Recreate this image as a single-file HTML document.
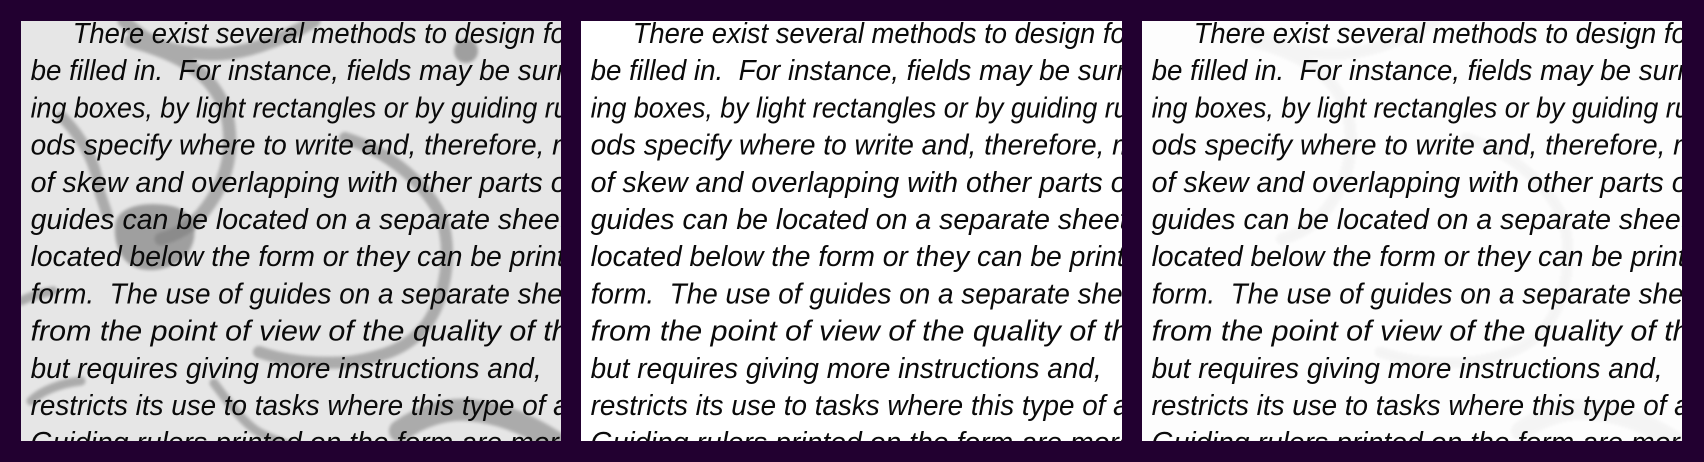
<!DOCTYPE html>
<html><head><meta charset="utf-8"><style>
html,body{margin:0;padding:0;background:#220030;}
svg{display:block}
text{font-family:"Liberation Sans",sans-serif;font-style:italic;font-size:29px;fill:#0a0a0a;white-space:pre}
</style></head><body>
<svg width="1704" height="462" viewBox="0 0 1704 462" xmlns="http://www.w3.org/2000/svg">
<defs>
<clipPath id="c1"><rect x="21" y="21" width="540" height="420"/></clipPath>
<clipPath id="c2"><rect x="581" y="21" width="541" height="420"/></clipPath>
<clipPath id="c3"><rect x="1142" y="21" width="540" height="420"/></clipPath>
<filter id="bl"><feGaussianBlur stdDeviation="1.5"/></filter>
</defs>
<rect width="1704" height="462" fill="#220030"/>

<!-- Panel 1 -->
<g clip-path="url(#c1)">
<rect x="21" y="21" width="540" height="420" fill="#e6e6e6"/>
<g transform="translate(21,21)" fill="none" stroke="#8c8c8c" stroke-linecap="round" opacity="0.65" filter="url(#bl)">
<path d="M103,0 C130,25 150,31 185,33 C220,35 260,20 293,0" stroke-width="13"/>
<path d="M110,20 C160,35 190,50 205,90 C215,130 205,165 179,195 C165,210 150,215 140,218" stroke-width="13"/>
<path d="M41,96 C60,115 75,140 79,172 L86,193" stroke-width="11"/>
<path d="M324,117 C360,128 400,155 420,195 C432,230 425,275 406,303 C390,325 365,336 327,341 C300,343 270,342 238,331" stroke-width="12"/>
<path d="M379,410 C400,395 425,387 448,389 C475,392 500,398 540,425" stroke-width="22"/>
<path d="M193,362 C210,385 225,405 241,413 C265,425 290,432 310,434" stroke-width="9"/>
<path d="M0,280 C10,275 20,272 32,270" stroke-width="9"/>
<path d="M10,380 C20,370 40,362 60,360" stroke-width="9"/>
</g>
<g transform="translate(21,21)" fill="#7a7a7a" opacity="0.65" filter="url(#bl)">
<path d="M95,200 C100,185 125,180 150,185 C175,190 180,215 165,235 C150,250 120,255 105,240 C95,230 92,212 95,200 Z"/>
<ellipse cx="445" cy="30" rx="12" ry="12"/>
</g>
<text x="72.7" y="43" textLength="493" lengthAdjust="spacingAndGlyphs">There exist several methods to design fo</text>
<text x="30.6" y="80.2" textLength="535" lengthAdjust="spacingAndGlyphs">be filled in.  For instance, fields may be surr</text>
<text x="30.6" y="117.4" textLength="538" lengthAdjust="spacingAndGlyphs">ing boxes, by light rectangles or by guiding ru</text>
<text x="30.6" y="154.6" textLength="545" lengthAdjust="spacingAndGlyphs">ods specify where to write and, therefore, m</text>
<text x="30.6" y="191.8" textLength="544" lengthAdjust="spacingAndGlyphs">of skew and overlapping with other parts of</text>
<text x="30.6" y="229" textLength="537" lengthAdjust="spacingAndGlyphs">guides can be located on a separate sheet</text>
<text x="30.6" y="266.2" textLength="534" lengthAdjust="spacingAndGlyphs">located below the form or they can be print</text>
<text x="30.6" y="303.4" textLength="532" lengthAdjust="spacingAndGlyphs">form.  The use of guides on a separate she</text>
<text x="30.6" y="340.6" textLength="538" lengthAdjust="spacingAndGlyphs">from the point of view of the quality of th</text>
<text x="30.6" y="377.8" textLength="511" lengthAdjust="spacingAndGlyphs">but requires giving more instructions and,</text>
<text x="30.6" y="415" textLength="538" lengthAdjust="spacingAndGlyphs">restricts its use to tasks where this type of a</text>
<text x="30.6" y="452.2" textLength="544" lengthAdjust="spacingAndGlyphs">Guiding rulers printed on the form are more</text>
</g>

<!-- Panel 2 -->
<g clip-path="url(#c2)">
<rect x="581" y="21" width="541" height="420" fill="#ffffff"/>
<g transform="translate(560,0)">
<text x="72.7" y="43" textLength="493" lengthAdjust="spacingAndGlyphs">There exist several methods to design fo</text>
<text x="30.6" y="80.2" textLength="535" lengthAdjust="spacingAndGlyphs">be filled in.  For instance, fields may be surr</text>
<text x="30.6" y="117.4" textLength="538" lengthAdjust="spacingAndGlyphs">ing boxes, by light rectangles or by guiding ru</text>
<text x="30.6" y="154.6" textLength="545" lengthAdjust="spacingAndGlyphs">ods specify where to write and, therefore, m</text>
<text x="30.6" y="191.8" textLength="544" lengthAdjust="spacingAndGlyphs">of skew and overlapping with other parts of</text>
<text x="30.6" y="229" textLength="537" lengthAdjust="spacingAndGlyphs">guides can be located on a separate sheet</text>
<text x="30.6" y="266.2" textLength="534" lengthAdjust="spacingAndGlyphs">located below the form or they can be print</text>
<text x="30.6" y="303.4" textLength="532" lengthAdjust="spacingAndGlyphs">form.  The use of guides on a separate she</text>
<text x="30.6" y="340.6" textLength="538" lengthAdjust="spacingAndGlyphs">from the point of view of the quality of th</text>
<text x="30.6" y="377.8" textLength="511" lengthAdjust="spacingAndGlyphs">but requires giving more instructions and,</text>
<text x="30.6" y="415" textLength="538" lengthAdjust="spacingAndGlyphs">restricts its use to tasks where this type of a</text>
<text x="30.6" y="452.2" textLength="544" lengthAdjust="spacingAndGlyphs">Guiding rulers printed on the form are more</text>
</g>
</g>

<!-- Panel 3 -->
<g clip-path="url(#c3)">
<rect x="1142" y="21" width="540" height="420" fill="#fdfdfd"/>
<g transform="translate(1142,21)" fill="none" stroke="#000" stroke-linecap="round" opacity="0.03" filter="url(#bl)">
<path d="M103,0 C130,25 150,31 185,33 C220,35 260,20 293,0" stroke-width="12"/>
<path d="M110,20 C160,35 190,50 205,90 C215,130 205,165 179,195 C165,210 150,215 140,218" stroke-width="12"/>
<path d="M324,117 C360,128 400,155 420,195 C432,230 425,275 406,303 C390,325 365,336 327,341 C300,343 270,342 238,331" stroke-width="11"/>
<path d="M379,410 C400,395 425,387 448,389 C475,392 500,398 540,425" stroke-width="20"/>
</g>
<g transform="translate(1121,0)">
<text x="72.7" y="43" textLength="493" lengthAdjust="spacingAndGlyphs">There exist several methods to design fo</text>
<text x="30.6" y="80.2" textLength="535" lengthAdjust="spacingAndGlyphs">be filled in.  For instance, fields may be surr</text>
<text x="30.6" y="117.4" textLength="538" lengthAdjust="spacingAndGlyphs">ing boxes, by light rectangles or by guiding ru</text>
<text x="30.6" y="154.6" textLength="545" lengthAdjust="spacingAndGlyphs">ods specify where to write and, therefore, m</text>
<text x="30.6" y="191.8" textLength="544" lengthAdjust="spacingAndGlyphs">of skew and overlapping with other parts of</text>
<text x="30.6" y="229" textLength="537" lengthAdjust="spacingAndGlyphs">guides can be located on a separate sheet</text>
<text x="30.6" y="266.2" textLength="534" lengthAdjust="spacingAndGlyphs">located below the form or they can be print</text>
<text x="30.6" y="303.4" textLength="532" lengthAdjust="spacingAndGlyphs">form.  The use of guides on a separate she</text>
<text x="30.6" y="340.6" textLength="538" lengthAdjust="spacingAndGlyphs">from the point of view of the quality of th</text>
<text x="30.6" y="377.8" textLength="511" lengthAdjust="spacingAndGlyphs">but requires giving more instructions and,</text>
<text x="30.6" y="415" textLength="538" lengthAdjust="spacingAndGlyphs">restricts its use to tasks where this type of a</text>
<text x="30.6" y="452.2" textLength="544" lengthAdjust="spacingAndGlyphs">Guiding rulers printed on the form are more</text>
</g>
</g>
</svg>
</body></html>
